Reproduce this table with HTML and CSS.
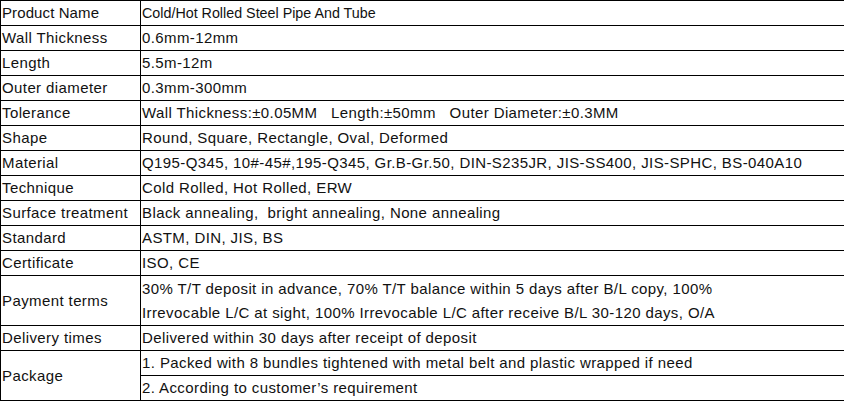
FILE: index.html
```html
<!DOCTYPE html>
<html>
<head>
<meta charset="utf-8">
<link rel="stylesheet" href="styles.css">
</head>
<body>
<table class="spec">
  <tr class="head"><td class="k">Product Name</td><td class="v">Cold/Hot Rolled Steel Pipe And Tube</td></tr>
  <tr><td class="k">Wall Thickness</td><td class="v">0.6mm-12mm</td></tr>
  <tr><td class="k">Length</td><td class="v">5.5m-12m</td></tr>
  <tr><td class="k">Outer diameter</td><td class="v">0.3mm-300mm</td></tr>
  <tr><td class="k">Tolerance</td><td class="v">Wall Thickness:±0.05MM&nbsp;&nbsp;&nbsp;Length:±50mm&nbsp;&nbsp;&nbsp;Outer Diameter:±0.3MM</td></tr>
  <tr><td class="k">Shape</td><td class="v">Round, Square, Rectangle, Oval, Deformed</td></tr>
  <tr><td class="k">Material</td><td class="v">Q195-Q345, 10#-45#,195-Q345, Gr.B-Gr.50, DIN-S235JR, JIS-SS400, JIS-SPHC, BS-040A10</td></tr>
  <tr><td class="k">Technique</td><td class="v">Cold Rolled, Hot Rolled, ERW</td></tr>
  <tr><td class="k">Surface treatment</td><td class="v">Black annealing,&nbsp; bright annealing, None annealing</td></tr>
  <tr><td class="k">Standard</td><td class="v">ASTM, DIN, JIS, BS</td></tr>
  <tr><td class="k">Certificate</td><td class="v">ISO, CE</td></tr>
  <tr class="tall"><td class="k">Payment terms</td><td class="v">30% T/T deposit in advance, 70% T/T balance within 5 days after B/L copy, 100%<br>Irrevocable L/C at sight, 100% Irrevocable L/C after receive B/L 30-120 days, O/A</td></tr>
  <tr><td class="k">Delivery times</td><td class="v">Delivered within 30 days after receipt of deposit</td></tr>
  <tr><td class="k" rowspan="2">Package</td><td class="v">1. Packed with 8 bundles tightened with metal belt and plastic wrapped if need</td></tr>
  <tr><td class="v">2. According to customer’s requirement</td></tr>
</table>
</body>
</html>
```
FILE: styles.css
```css
html, body {
  margin: 0;
  padding: 0;
  background: #fff;
  overflow: hidden;
}
.spec {
  border-collapse: collapse;
  width: 860px;
  font-family: "Liberation Sans", Arial, sans-serif;
  font-size: 15px;
  letter-spacing: 0.4px;
  color: #111;
}
.spec tr {
  height: 25px;
}
.spec tr.tall {
  height: 50px;
}
.spec td {
  border: 1px solid #000;
  padding: 0 1px;
  vertical-align: middle;
  white-space: nowrap;
  line-height: 24px;
}
.spec td.k {
  width: 137px;
}
.spec tr.head td.k {
  letter-spacing: 0.1px;
}
.spec tr.head td.v {
  font-size: 14.3px;
  letter-spacing: 0;
}
```
